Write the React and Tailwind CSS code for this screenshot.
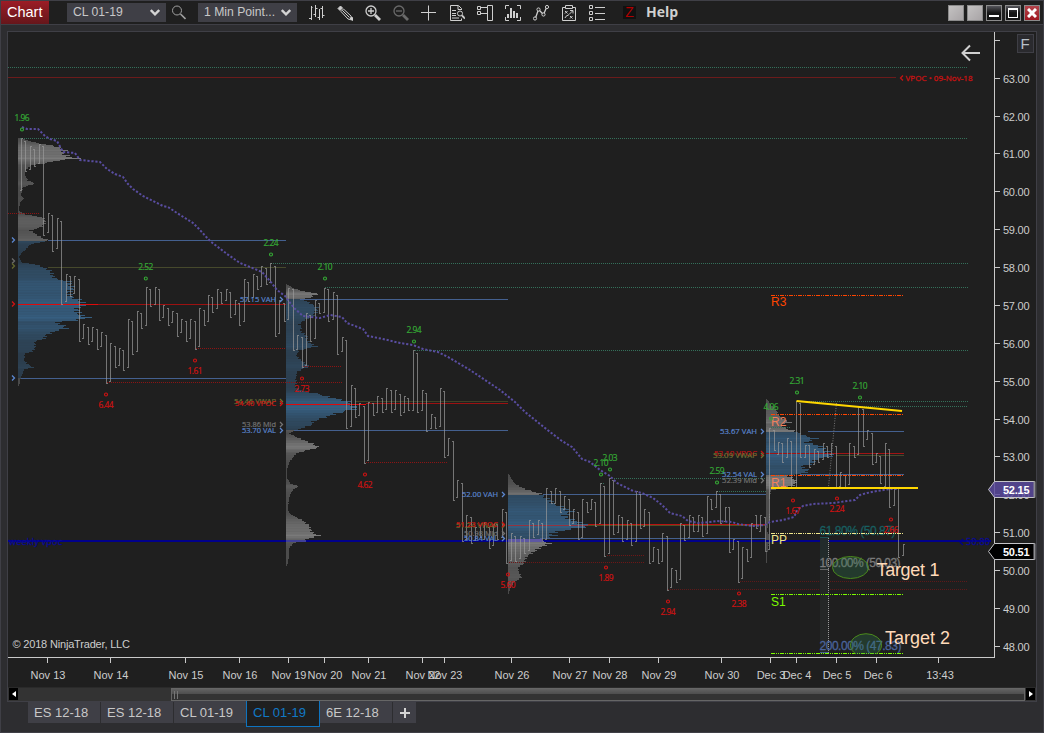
import React from 'react';

const UI = '"Liberation Sans", Arial, sans-serif';
const SMALL = '"Open Sans", "Noto Sans", sans-serif';

// [high, low] of every bar, in chart pixels
const BARS = [
  [138, 190], [141, 171], [146, 169], [149, 166], [144, 163], [146, 235], [213, 232], [215, 251], [218, 248], [221, 304],
  [274, 301], [276, 296], [276, 293], [279, 341], [324, 338], [327, 344], [327, 341], [329, 349], [332, 346], [335, 383],
  [343, 381], [346, 367], [348, 365], [350, 370], [319, 367], [321, 354], [311, 351], [313, 328], [287, 325], [289, 306],
  [287, 304], [289, 320], [305, 317], [308, 325], [311, 322], [313, 336], [319, 332], [321, 341], [319, 338], [321, 349],
  [308, 346], [310, 325], [295, 321], [297, 312], [289, 308], [292, 303], [289, 300], [292, 317], [300, 314], [303, 325],
  [279, 321], [282, 301], [274, 297], [276, 289], [266, 286], [268, 284], [263, 282], [266, 336], [300, 333], [303, 321],
  [288, 319], [289, 350], [335, 349], [337, 367], [313, 365], [315, 341], [300, 338], [303, 313], [288, 312], [289, 321],
  [292, 319], [295, 354], [337, 351], [340, 428], [385, 426], [388, 417], [403, 415], [406, 463], [402, 460], [403, 415],
  [396, 412], [398, 412], [388, 409], [390, 412], [390, 409], [394, 415], [396, 412], [398, 410], [350, 410], [353, 412],
  [390, 410], [393, 431], [414, 428], [417, 428], [388, 426], [391, 457], [438, 455], [441, 500], [480, 497], [483, 541],
  [515, 539], [517, 543], [527, 540], [525, 537], [522, 539], [527, 548], [524, 545], [524, 539], [509, 537], [512, 563],
  [533, 560], [536, 561], [536, 558], [538, 553], [520, 550], [523, 537], [520, 534], [523, 541], [488, 539], [491, 503],
  [488, 503], [491, 512], [496, 509], [499, 525], [509, 523], [512, 539], [499, 537], [502, 512], [499, 509], [502, 526],
  [483, 523], [486, 556], [478, 553], [480, 534], [515, 532], [517, 541], [520, 539], [523, 545], [491, 541], [494, 528],
  [509, 526], [512, 563], [547, 561], [549, 563], [533, 561], [536, 590], [568, 587], [570, 582], [523, 579], [525, 540],
  [515, 537], [517, 531], [515, 531], [517, 536], [496, 533], [499, 509], [491, 507], [494, 523], [507, 521], [507, 552],
  [539, 549], [541, 582], [547, 578], [549, 561], [523, 557], [515, 528], [515, 531], [517, 551], [428, 549], [430, 450],
  [442, 454], [443, 462], [438, 457], [441, 487], [401, 488], [403, 457], [445, 457], [445, 467], [449, 464], [451, 462],
  [443, 459], [446, 457], [443, 454], [446, 487], [472, 486], [475, 487], [443, 484], [446, 457], [407, 454], [409, 446],
  [430, 439], [433, 464], [453, 462], [456, 483], [443, 486], [449, 507], [489, 505], [488, 557], [544, 555],
];

const barX = (i) => Math.round(21 + i * 4.453) + 0.5;

// left bottom tick for rising bars, left top tick for falling bars
const barPath = BARS.map(([hi, lo], i) => {
  const x = barX(i);
  const open = i % 2 ? hi : lo;
  const close = i % 2 ? lo : hi;
  return `M${x} ${hi}V${lo + 1}M${x - 1.5} ${open + 0.5}H${x}M${x} ${close + 0.5}H${x + 1.5}`;
}).join('');

// volume profiles: control points are [y, width], rows in between are interpolated
const PROFILES = [
  {
    x: 18, vah: 241, val: 378,
    pts: [[138, 3], [142, 17], [146, 39], [150, 47], [153, 45], [156, 50], [158, 60], [160, 40], [163, 25], [165, 13], [170, 7], [175, 7], [180, 10], [183, 17], [187, 5], [195, 3], [198, 6], [202, 2], [210, 1], [214, 7], [217, 25], [222, 28], [227, 22], [230, 12], [233, 17], [237, 23], [240, 31], [241, 26], [244, 12], [248, 9], [253, 3], [257, 1], [262, 4], [264, 18], [270, 32], [274, 34], [278, 37], [281, 51], [285, 53], [288, 55], [293, 50], [297, 55], [300, 62], [305, 68], [307, 59], [312, 60], [315, 63], [317, 71], [320, 56], [322, 37], [325, 46], [328, 48], [331, 36], [335, 27], [338, 27], [341, 17], [347, 17], [351, 15], [353, 7], [360, 6], [363, 9], [367, 15], [369, 6], [377, 3], [385, 1]],
  },
  {
    x: 286, vah: 299, val: 430,
    pts: [[284, 1], [288, 8], [291, 18], [293, 32], [297, 24], [299, 17], [302, 23], [307, 31], [312, 30], [317, 25], [320, 18], [324, 13], [327, 16], [330, 14], [335, 20], [341, 22], [346, 30], [350, 13], [355, 10], [360, 15], [366, 24], [369, 15], [372, 11], [378, 10], [387, 10], [391, 18], [393, 31], [397, 44], [400, 59], [404, 68], [408, 70], [412, 54], [417, 38], [421, 27], [424, 26], [427, 18], [431, 7], [433, 3], [438, 14], [443, 26], [447, 33], [450, 20], [453, 10], [457, 7], [462, 3], [470, 1], [477, 1], [483, 4], [486, 13], [489, 7], [493, 5], [498, 3], [510, 2], [514, 5], [520, 17], [525, 23], [532, 26], [535, 33], [539, 20], [543, 7], [548, 3], [557, 3], [565, 1]],
  },
  {
    x: 508, vah: 495, val: 539,
    pts: [[474, 1], [478, 3], [482, 6], [485, 10], [489, 18], [493, 32], [497, 37], [500, 43], [503, 45], [507, 55], [511, 63], [515, 57], [518, 60], [522, 72], [526, 80], [528, 67], [531, 50], [533, 43], [535, 47], [538, 37], [540, 30], [543, 42], [547, 32], [550, 28], [555, 20], [560, 17], [564, 15], [567, 10], [572, 11], [577, 13], [582, 6], [585, 4], [588, 2], [593, 1]],
  },
  {
    x: 766, vah: 432, val: 475,
    pts: [[399, 1], [403, 4], [410, 10], [415, 13], [418, 17], [422, 24], [424, 15], [428, 20], [431, 30], [435, 38], [438, 50], [442, 40], [445, 53], [449, 58], [455, 67], [459, 50], [463, 47], [466, 35], [470, 43], [473, 37], [475, 20], [477, 25], [481, 31], [485, 27], [488, 17], [490, 5], [495, 4], [503, 3], [512, 3], [517, 4], [523, 2], [530, 1], [535, 3], [542, 3], [548, 2], [555, 1], [562, 1]],
  },
];

const profileRows = ({ pts, vah, val }) => {
  const rows = [];
  for (let y = pts[0][0]; y <= pts[pts.length - 1][0]; y++) {
    const k = Math.max(1, pts.findIndex((p) => p[0] >= y));
    const [y0, w0] = pts[k - 1];
    const [y1, w1] = pts[k];
    const base = w0 + ((w1 - w0) * (y - y0)) / (y1 - y0);
    const w = Math.max(1, Math.round(base * (1 + 0.07 * Math.sin(y * 2.4))));
    rows.push({ y, w, value: y >= vah && y < val });
  }
  return rows;
};

const mixColor = (a, b, t) =>
  `rgb(${a.map((v, i) => Math.round(v + (b[i] - v) * t)).join(',')})`;

const Profile = ({ profile }) => {
  const rows = profileRows(profile);
  const maxBlue = Math.max(...rows.filter((r) => r.value).map((r) => r.w));
  const maxGray = Math.max(...rows.filter((r) => !r.value).map((r) => r.w));
  return (
    <g shapeRendering="crispEdges">
      {rows.map(({ y, w, value }) => (
        <rect
          key={y}
          x={profile.x}
          y={y}
          width={w}
          height={1}
          fill={
            value
              ? mixColor([42, 58, 72], [54, 94, 128], w / maxBlue)
              : mixColor([72, 72, 72], [122, 122, 122], w / maxGray)
          }
        />
      ))}
    </g>
  );
};

const AVERAGE =
  '22,127 27,129 38,129 45,136 50,139 57,141 63,152 75,153 80,160 100,162 107,169 115,174 123,177 128,184 133,189 143,196 163,206 168,207 177,213 185,218 193,223 199,229 210,241 227,254 240,263 250,267 262,272 270,281 277,290 285,296 294,308 303,316 320,318 330,315 342,317 347,323 363,329 368,336 383,339 400,343 413,345 423,349 438,352 448,357 470,370 485,380 500,390 515,402 525,412 540,424 550,432 562,441 572,447 582,459 590,462 600,470 610,476 617,483 633,491 642,493 653,498 662,505 670,513 682,516 688,521 698,523 710,522 717,521 732,522 738,524 753,526 765,525 770,522 783,520 794,517 798,509 803,506 813,504 833,503 855,500 860,495 867,493 877,491 890,489 898,489';

const GREEN = '#34705a';
const RED = '#8c1414';
const BLUE = '#44608f';
const OLIVE = '#46492c';

// [y, x1, x2, color]
const DOTTED = [
  [67, 8, 968, GREEN], [138, 20, 968, GREEN], [263, 271, 968, GREEN], [287, 325, 968, GREEN],
  [350, 415, 968, GREEN], [478, 614, 766, GREEN], [483, 601, 605, GREEN], [491, 717, 766, GREEN],
  [401, 797, 968, GREEN], [406, 860, 968, GREEN], [427, 771, 790, GREEN],
  [213, 8, 39, RED], [382, 107, 342, RED], [348, 196, 286, RED], [366, 302, 342, RED], [462, 366, 447, RED],
  [555, 607, 644, '#6e1717'], [562, 509, 644, '#6e1717'], [581, 740, 968, '#5e1919'], [589, 668, 968, '#5e1919'],
];

const SOLID = [
  [77, 8, 896, '#6b1b1b'],
  [240, 48, 286, BLUE], [267, 48, 286, OLIVE], [304, 98, 286, '#9c1111'], [378, 21, 286, BLUE],
  [299, 300, 508, BLUE], [401, 355, 508, '#3f4326'], [403, 366, 508, '#9c1111'], [430, 294, 508, BLUE],
  [494, 543, 766, BLUE], [525, 588, 766, '#504f24'], [524, 588, 766, '#b81212'], [538, 540, 766, BLUE], [525, 508, 588, '#93333f'],
  [431, 808, 904, BLUE], [453, 766, 904, '#a01414'], [455, 836, 904, OLIVE], [474, 800, 904, BLUE],
];

const PIVOTS = [
  { name: 'R3', y: 295.5, textY: 306, line: '#ff4500', color: '#ff4500' },
  { name: 'R2', y: 414.5, textY: 425.5, line: '#ff4500', color: '#f0805c' },
  { name: 'R1', y: 475.5, textY: 486.5, line: '#ff4500', color: '#f0805c' },
  { name: 'PP', y: 533.5, textY: 544, line: '#f0e68c', color: '#f0e68c' },
  { name: 'S1', y: 594.5, textY: 605.5, line: '#7cfc00', color: '#7cfc00' },
  { name: '', y: 653.5, textY: 664, line: '#7cfc00', color: '#7cfc00' },
];

const SWING_HIGHS = [
  [22, 129.5, '1.96'], [145.8, 278.5, '2.52'], [271, 254.5, '2.24'], [325, 278.5, '2.10'], [414, 341.5, '2.94'],
  [601, 474.5, '2.10'], [610, 469.5, '2.03'], [717, 482.5, '2.59'], [771, 418.5, '4.06'], [797, 392.5, '2.31'],
  [860, 397.5, '2.10'],
];

const SWING_LOWS = [
  [106, 394.5, '6.44'], [195, 360.5, '1.61'], [302, 378.5, '2.73'], [365, 474.5, '4.62'], [508, 574.5, '5.60'],
  [606, 567.5, '1.89'], [668, 601.5, '2.94'], [739, 593.5, '2.38'], [793, 500.5, '1.67'], [837, 498.5, '2.24'],
  [891, 519.5, '2.66'],
];

// [x, right, baseline, color, text]
const LEVELS = [
  [240, 276, 302, '#5b86cf', '57.15 VAH'], [234, 276, 404, '#6c7033', '54.46 VWAP'], [235, 276, 406, '#d01313', '54.40 VPOC'],
  [242, 276, 427, '#737373', '53.86 Mid'], [242, 276, 433, '#5b86cf', '53.70 VAL'],
  [462, 498, 497, '#5b86cf', '52.00 VAH'], [456, 498, 528, '#6c7033', '51.24 VWAP'], [456, 498, 527, '#d01313', '51.23 VPOC'],
  [464, 498, 536, '#737373', '50.98 Mid'], [464, 498, 541, '#5b86cf', '50.84 VAL'],
  [720, 757, 434, '#5b86cf', '53.67 VAH'], [714, 757, 456, '#c01313', '53.10 VPOC'], [713, 757, 458, '#6c7033', '53.09 VWAP'],
  [722, 757, 483, '#737373', '52.39 Mid'], [722, 757, 477, '#5b86cf', '52.54 VAL'],
];

const LEFT_MARKS = [[240, '#5b86cf'], [261, '#6b6b6b'], [266, '#64682f'], [304, '#d01313'], [378, '#5b86cf']];

const DATES = [
  [47, 48, 'Nov 13'], [110, 111, 'Nov 14'], [185, 186, 'Nov 15'], [239, 240, 'Nov 16'], [288, 289, 'Nov 19'], [324, 325, 'Nov 20'],
  [368, 369, 'Nov 21'], [422, 423, 'Nov 22'], [444, 445, 'Nov 23'], [511, 512, 'Nov 26'], [569, 570, 'Nov 27'], [609, 610, 'Nov 28'],
  [658, 659, 'Nov 29'], [721, 722, 'Nov 30'], [770, 771, 'Dec 3'], [796, 797, 'Dec 4'], [836, 837, 'Dec 5'], [876, 878, 'Dec 6'],
  [938, 940, '13:43'],
];

const PRICES = Array.from({ length: 16 }, (_, i) => ({
  label: `${63 - i}.00`,
  y: Math.floor(78.2 + i * 37.87) + 0.5,
}));

const Swing = ({ x, y, textY, label, color }) => (
  <g>
    <circle cx={x} cy={y} r="1.5" fill="none" stroke={color} strokeWidth="1.1" />
    <text x={x - 7.5} y={textY} fontSize="8.4" fill={color} stroke={color} strokeWidth="0.2" textLength="15" fontFamily={SMALL}>{label}</text>
  </g>
);

const Chevron = ({ x, y, color }) => (
  <path d={`M${x} ${y - 2.5}l2.5 2.5l-2.5 2.5`} fill="none" stroke={color} strokeWidth="1.3" />
);

const PriceFlag = ({ y, fill, opacity = 1, label }) => (
  <g>
    <path d={`M988.5 ${y}L994.5 ${y - 8}H1034.5V${y + 8}H994.5Z`} fill={fill} fillOpacity={opacity} stroke="#c4c4c8" strokeWidth="1" />
    <path d={`M1034.5 ${y - 8}V${y + 8}`} stroke="#8d8d92" strokeWidth="2" />
    <text x="1003" y={y + 4.5} fontSize="11" fontWeight="bold" fill="#fff" textLength="26.5">{label}</text>
  </g>
);

const Chart = () => (
  <svg className="block" width="1028" height="655" viewBox="8 32 1028 655" fontFamily={UI}>
    {PROFILES.map((p) => <Profile key={p.x} profile={p} />)}

    <g shapeRendering="crispEdges">
      {DOTTED.map(([y, x1, x2, color]) => (
        <line key={`${y}-${x1}`} x1={x1} x2={x2} y1={y + 0.5} y2={y + 0.5} stroke={color} strokeDasharray="1 1" />
      ))}
      {SOLID.map(([y, x1, x2, color]) => (
        <line key={`${y}-${x1}`} x1={x1} x2={x2} y1={y + 0.5} y2={y + 0.5} stroke={color} />
      ))}
      <rect x="8" y="540" width="983" height="2" fill="#00008b" />
      <rect x="508" y="539" width="34" height="3" fill="#5d57a3" />
      <rect x="286" y="540" width="20" height="2" fill="#3f3f98" />
      <rect x="18" y="304" width="80" height="1" fill="#e00a0a" />
      <rect x="286" y="404" width="80" height="1" fill="#e00a0a" />
    </g>

    <path d={barPath} fill="none" stroke="#9a9a9a" strokeOpacity="0.7" strokeWidth="1" shapeRendering="crispEdges" />
    <polyline points={AVERAGE} fill="none" stroke="#594da0" strokeWidth="2" strokeDasharray="2.2 1.8" />

    {/* fibonacci extension */}
    <rect x="820" y="537" width="9" height="117" fill="#252727" />
    <rect x="820" y="537" width="9" height="32" fill="#222b2b" />
    <g shapeRendering="crispEdges">
      <line x1="820" x2="829" y1="537.5" y2="537.5" stroke="#1c5052" />
      <line x1="820" x2="829" y1="569.5" y2="569.5" stroke="#666" />
      <line x1="820" x2="829" y1="652.5" y2="652.5" stroke="#44608f" />
      <line x1="828.5" x2="828.5" y1="538" y2="653" stroke="#9a9a9a" strokeDasharray="1 1" />
    </g>
    <path d="M836.5 403L828.5 487" stroke="#777" strokeDasharray="1 1.5" />
    <g fontSize="12" strokeWidth="0.3">
      <text x="819.5" y="535" fill="#185f61" stroke="#185f61" textLength="76">61.80% (50.87)</text>
      <text x="819.5" y="567" fill="#7a7a7a" stroke="#7a7a7a" textLength="81">100.00% (50.03)</text>
      <text x="819.5" y="650" fill="#4a639a" stroke="#4a639a" textLength="82">200.00% (47.83)</text>
    </g>

    {PIVOTS.map(({ name, y, textY, line, color }) => (
      <g key={y}>
        <line x1="771" x2="903" y1={y} y2={y} stroke={line} strokeDasharray="4 1 1 1 1 1" shapeRendering="crispEdges" />
        {name && <text x="771" y={textY} fontSize="12" fill={color}>{name}</text>}
      </g>
    ))}

    <g fill="#2f7a50" fillOpacity="0.3" stroke="#4b8a1c">
      <ellipse cx="850.5" cy="567.5" rx="18" ry="11" />
      <path d="M856 654A15.5 11.5 0 1 1 876 654" />
    </g>

    <path d="M796.5 401L902 411" stroke="#ffd700" strokeWidth="2" />
    <path d="M771 488H918" stroke="#ffd700" strokeWidth="2" />

    {LEVELS.map(([x, right, y, color, text]) => (
      <g key={text}>
        <text x={x} y={y} fontSize="8" fill={color} stroke={color} strokeWidth="0.2" textLength={right - x} lengthAdjust="spacingAndGlyphs" fontFamily={SMALL}>{text}</text>
        <Chevron x={right + 4} y={y - 2.5} color={color} />
      </g>
    ))}
    {LEFT_MARKS.map(([y, color]) => <Chevron key={y} x={12} y={y} color={color} />)}

    {SWING_HIGHS.map(([x, y, label]) => (
      <Swing key={`${x}`} x={x} y={y} textY={y - 8.5} label={label} color="#35a935" />
    ))}
    {SWING_LOWS.map(([x, y, label]) => (
      <Swing key={`${x}`} x={x} y={y} textY={y + 13.5} label={label} color="#cf1212" />
    ))}

    <g fontFamily={SMALL} fontSize="8" strokeWidth="0.3">
      <path d="M903 75.5l-2.5 2.5l2.5 2.5" fill="none" stroke="#c41212" strokeWidth="1.3" />
      <text x="905.5" y="81" fill="#c41212" stroke="#c41212" textLength="67">VPOC • 09-Nov-18</text>
      <text x="9" y="545" fill="#0a0a94" stroke="#0a0a94" fontSize="9" textLength="53">weekly vpoc</text>
      <path d="M963 539l-3 3l3 3" fill="none" stroke="#00008b" strokeWidth="1.3" />
      <text x="966" y="545" fill="#0a0a94" stroke="#0a0a94" fontSize="9" textLength="24">50.80</text>
    </g>

    <g fill="#ffdab9" fontSize="18">
      <text x="876.5" y="575.5" textLength="63">Target 1</text>
      <text x="885" y="643.5" textLength="65">Target 2</text>
    </g>

    {/* axes */}
    <g stroke="#c9c9c9" shapeRendering="crispEdges">
      <path d="M994.5 32V658M8 657.5H995M995 40.5H1000" fill="none" />
      {PRICES.map(({ y }) => <line key={y} x1="995" x2="1000" y1={y} y2={y} />)}
      {DATES.map(([x]) => <line key={x} x1={x + 0.5} x2={x + 0.5} y1="658" y2="663" />)}
    </g>
    <g fill="#cdcdcd" fontSize="11">
      {PRICES.map(({ y, label }) => <text key={y} x="1003" y={y + 4} textLength="26.5">{label}</text>)}
      {DATES.map(([x, cx, label]) => <text key={x} x={cx} y="679" textAnchor="middle">{label}</text>)}
      <text x="12.5" y="648" textLength="117.5">© 2018 NinjaTrader, LLC</text>
    </g>
    <PriceFlag y={489.5} fill="#5b4a9e" opacity={0.85} label="52.15" />
    <PriceFlag y={551.5} fill="#000" label="50.51" />

    <path d="M980 53H963M970 45.5L962.5 53L970 60.5" fill="none" stroke="#d0d0d0" strokeWidth="2" />
    <rect x="1017.5" y="34.5" width="16" height="18" fill="#2a2a2e" stroke="#3f3f46" />
    <text x="1020.5" y="49" fontSize="15" fill="#b8c0c8">F</text>
  </svg>
);

const Icon = ({ children, dim }) => (
  <span className="w-7 flex justify-center">
    <svg width="16" height="16" viewBox="0 0 16 16" fill="none" stroke={dim ? '#6a6a6a' : '#cfcfcf'} strokeWidth="1">
      {children}
    </svg>
  </span>
);

const Toolbar = () => (
  <div className="flex items-center">
    <Icon><path d="M2.5 1v14M0 13.5h2M2.5 2.5h1M6.5 0v12M4.5 9.5h2M6.5 3.5h2M10.5 4v11M8.5 12.5h2M13.5 1v12M11.5 3.5h2M13.5 10.5h2" /></Icon>
    <Icon>
      <path d="M1 3.5L3.5 1L5.5 3L3 5.5Z" fill="#cfcfcf" />
      <path d="M4 6.5L6.5 4L14 11L15 15L11 14Z M5.3 5.3L12.5 12.5" />
      <path d="M13 13l2.5 2.5v-3z" fill="#cfcfcf" />
    </Icon>
    <Icon>
      <circle cx="6" cy="6" r="5" strokeWidth="1.3" /><path d="M6 3v6M3 6h6" strokeWidth="1.3" /><path d="M10 10l5 5" strokeWidth="2.8" />
    </Icon>
    <Icon dim>
      <circle cx="6" cy="6" r="5" strokeWidth="1.3" /><path d="M3 6h6" strokeWidth="1.3" /><path d="M10 10l5 5" strokeWidth="2.8" />
    </Icon>
    <Icon><path d="M7.5 0.5v15M0 7.5h15" /></Icon>
    <Icon>
      <path d="M12.5 5V3.5L9.5 .5h-8v15h11v-2M9 1v3.5h3M3 5.5h4M3 8.5h4M3 10.5h4M3 13h7" />
      <circle cx="11" cy="8.5" r="2.5" /><path d="M13 10.5l3 3" strokeWidth="1.8" />
    </Icon>
    <Icon><path d="M10.5 .5h5v15h-5zM.5 1.5h3v3h-3zM.5 6.5h3v3h-3zM4 2.5h6M4 8.5h6" /></Icon>
    <Icon>
      <path d="M.5 4V.5H4M12 .5h3.5V4M.5 12v3.5H4M12 15.5h3.5V12" />
      <path d="M3 13V9M6 13V3M9 13V6M12 13V8" strokeWidth="2" />
    </Icon>
    <Icon>
      <path d="M2.5 13L5.5 4.5L10.5 9.5L13.5 2.5" strokeWidth="1.3" />
      <g fill="#1f1f1f">
        <circle cx="2" cy="13.5" r="1.6" /><circle cx="5.5" cy="4.5" r="1.6" />
        <circle cx="10.5" cy="9.5" r="1.6" /><circle cx="14" cy="2" r="1.6" />
      </g>
    </Icon>
    <Icon>
      <path d="M4 2.5H1.5v13h13v-13H12M4.5 .5h7v3h-7zM4 6l2.5 2.5M6.5 6L4 8.5M9 11l2.5 2.5M11.5 11L9 13.5M4 13c1-3 3-2 4-3.5L11.5 6M9 5.5h3v3" />
    </Icon>
    <Icon><path d="M.5 .5h3v3h-3zM.5 6.5h3v3h-3zM.5 12.5h3v3h-3zM6 2.5h10M6 8.5h10M6 14.5h10" /></Icon>
  </div>
);

const Select = ({ children }) => (
  <div className="flex items-center justify-between w-[99px] h-[19px] bg-[#3f3f46] pl-1.5 pr-1.5 text-[12.2px] text-[#c8c8c8] whitespace-nowrap">
    <span>{children}</span>
    <svg width="10" height="7" viewBox="0 0 10 7" fill="none" stroke="#d4d4d4" strokeWidth="2.4">
      <path d="M.8 1L5 5.3L9.2 1" />
    </svg>
  </div>
);

const WindowButton = ({ className, children }) => (
  <button className={`flex items-center justify-center w-4 h-4 border border-[#8b8b8b] ${className}`}>
    {children}
  </button>
);

const TitleBar = () => (
  <div className="flex items-center h-[25px] bg-[#1f1f1f] border-y border-[#3f3f46]">
    <div className="w-12 h-[23px] pl-1.5 ml-px bg-linear-to-b from-[#9c1c25] to-[#66161b] text-white text-[14.5px] leading-[23px]">
      Chart
    </div>
    <div className="ml-[18px]"><Select>CL 01-19</Select></div>
    <svg className="ml-1.5 mr-3" width="14" height="15" viewBox="0 0 14 15" fill="none" stroke="#a0a0a0">
      <circle cx="5" cy="5.5" r="4.5" /><path d="M8.5 9l5 5" strokeWidth="1.6" />
    </svg>
    <Select>1 Min Point...</Select>
    <div className="ml-[6px]"><Toolbar /></div>
    <div className="ml-3 mb-px w-[13px] h-[13px] bg-[#111] text-[#b00000] text-[14px] leading-[13px] text-center">Z</div>
    <div className="ml-2.5 mb-0.5 font-['Open_Sans',sans-serif] font-bold text-[14px] leading-5 text-[#d0d0d0]">Help</div>
    <div className="ml-auto mr-1 flex gap-[3px]">
      <WindowButton className="bg-linear-to-br from-[#c4c2c2] to-[#a8a4a6]" />
      <WindowButton className="bg-linear-to-br from-[#c4c2c2] to-[#a8a4a6]" />
      <WindowButton className="bg-linear-to-b from-[#55555b] to-[#151515] to-50%">
        <span className="w-2.5 h-0.5 mt-1.5 bg-white" />
      </WindowButton>
      <WindowButton className="bg-linear-to-b from-[#55555b] to-[#151515] to-50%">
        <span className="w-2.5 h-2.5 border border-t-2 border-white" />
      </WindowButton>
      <WindowButton className="bg-linear-to-b from-[#b3434b] to-[#a01620]">
        <svg width="10" height="10" viewBox="0 0 10 10" stroke="#fff" strokeWidth="3"><path d="M1 1l8 8M9 1l-8 8" /></svg>
      </WindowButton>
    </div>
  </div>
);

const ScrollBar = () => (
  <div className="flex h-3.5 bg-[#333] border-t border-[#2a2a2a]">
    <div className="flex items-center justify-center w-[9px] h-3 ml-px bg-black">
      <svg width="4" height="6" viewBox="0 0 4 6"><path d="M4 0v6L0 3z" fill="#fff" /></svg>
    </div>
    <div className="ml-[153px] flex-1 border border-[#666] bg-linear-to-b from-[#626262] via-[#4c4c4c] via-50% to-[#333] to-50%">
      <div className="ml-0.5 mt-0.5 w-1 h-2 border-x border-[#777]" />
    </div>
    <div className="flex items-center justify-center w-[9px] h-3 mx-px bg-black">
      <svg width="4" height="6" viewBox="0 0 4 6"><path d="M0 0v6l4-3z" fill="#fff" /></svg>
    </div>
  </div>
);

const TABS = ['ES 12-18', 'ES 12-18', 'CL 01-19', 'CL 01-19', '6E 12-18'];

const Tabs = () => (
  <div className="flex items-start pl-7 text-[13px] leading-[21px] text-[#c8c8c8]">
    {TABS.map((tab, i) =>
      i === 3 ? (
        <div key={i} className="w-[74px] h-[26px] -mt-px -ml-px pl-1.5 border border-t-0 border-[#0e74c0] bg-[#1f1f1f] text-[#1179c6] font-medium leading-[23px]">
          {tab}
        </div>
      ) : (
        <div key={i} className="w-[72px] h-[21px] mr-px pl-1.5 bg-[#3f3f46]">{tab}</div>
      )
    )}
    <div className="flex items-center justify-center w-[23px] h-[21px] bg-[#3f3f46]">
      <svg width="10" height="10" viewBox="0 0 10 10" stroke="#d4d4d4" strokeWidth="2"><path d="M5 0v10M0 5h10" /></svg>
    </div>
  </div>
);

const App = () => (
  <div className="w-[1044px] h-[733px] overflow-hidden bg-[#2d2d30] border-x border-b border-[#3f3f46] font-['Liberation_Sans',Arial,sans-serif]">
    <div className="-mx-px">
      <TitleBar />
      <div className="mt-1.5 ml-[7px] mr-[7px] border border-[#3f3f46] bg-[#1f1f1f]">
        <Chart />
        <ScrollBar />
      </div>
      <Tabs />
    </div>
  </div>
);

export default App;
